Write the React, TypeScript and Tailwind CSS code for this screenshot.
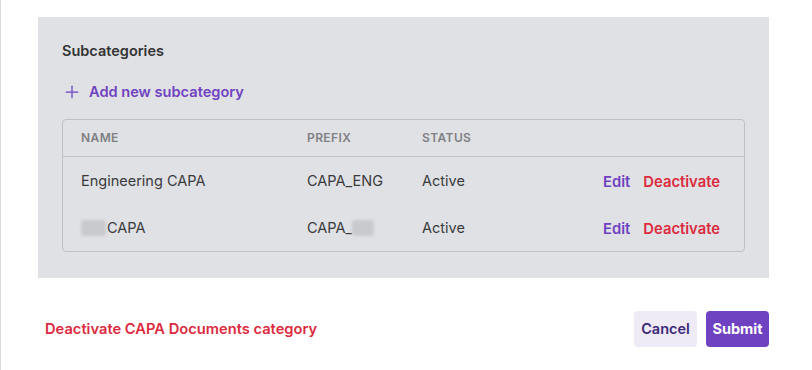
import { Plus } from 'lucide-react';

const rows = [
  { name: 'Engineering CAPA', prefix: 'CAPA_ENG', redacted: false },
  { name: 'CAPA', prefix: 'CAPA_', redacted: true },
];

function Redact({ className }: { className: string }) {
  return <span className={`inline-block h-[16px] rounded-sm bg-[#c9cacd] blur-[1.5px] align-middle ${className}`} />;
}

export default function App() {
  return (
    <div className="relative h-[370px] w-[812px] bg-white font-['Inter',sans-serif]">
      <div className="absolute left-0 top-0 h-full w-px bg-[#dcdcdc]" />
      <div className="pl-[38px] pr-[43px] pt-[17px]">
        <div className="bg-[#e0e1e5] px-[24px] pb-[26px] pt-[23px]">
          <h3 className="text-[14.5px] font-semibold leading-[21px] text-[#333333]">Subcategories</h3>
          <button className="mt-[21px] flex items-center gap-[7px] text-[14.6px] font-semibold leading-[20px] text-[#6f42c1]">
            <Plus className="h-[20px] w-[20px]" strokeWidth={1.5} />
            Add new subcategory
          </button>
          <div className="mt-[17px] rounded-[4px] border border-[#bfc0c4]">
            <div className="flex h-[37px] items-center border-b border-[#bfc0c4] pl-[18px] text-[12px] font-semibold tracking-[0.4px] text-[#7f7f83]">
              <div className="w-[226px]">NAME</div>
              <div className="w-[115px]">PREFIX</div>
              <div>STATUS</div>
            </div>
            {rows.map((r, i) => (
              <div key={i} className="flex h-[47px] items-center pl-[18px] pr-[24px] pt-[1px] text-[14.5px] text-[#3a3a3c]">
                <div className="flex w-[226px] items-center">
                  {r.redacted && <Redact className="mr-[1px] w-[25px]" />}
                  {r.name}
                </div>
                <div className="flex w-[115px] items-center">
                  {r.prefix}
                  {r.redacted && <Redact className="w-[22px]" />}
                </div>
                <div className="flex-1">Active</div>
                <div className="flex items-center gap-[13px] pt-[2px] text-[14.8px] font-semibold">
                  <span className="text-[#6f42c1]">Edit</span>
                  <span className="text-[#dc2b3e]">Deactivate</span>
                </div>
              </div>
            ))}
          </div>
        </div>
        <div className="mt-[33px] flex items-center justify-between pl-[7px]">
          <span className="text-[14.7px] font-semibold text-[#dc2b3e]">Deactivate CAPA Documents category</span>
          <div className="flex gap-[9px]">
            <button className="h-[36px] w-[63px] rounded-[4px] bg-[#eeeaf6] text-[14.5px] font-semibold text-[#3b2a78]">Cancel</button>
            <button className="h-[36px] w-[63px] rounded-[4px] bg-[#6f42c1] text-[14.5px] font-bold text-white">Submit</button>
          </div>
        </div>
      </div>
    </div>
  );
}
